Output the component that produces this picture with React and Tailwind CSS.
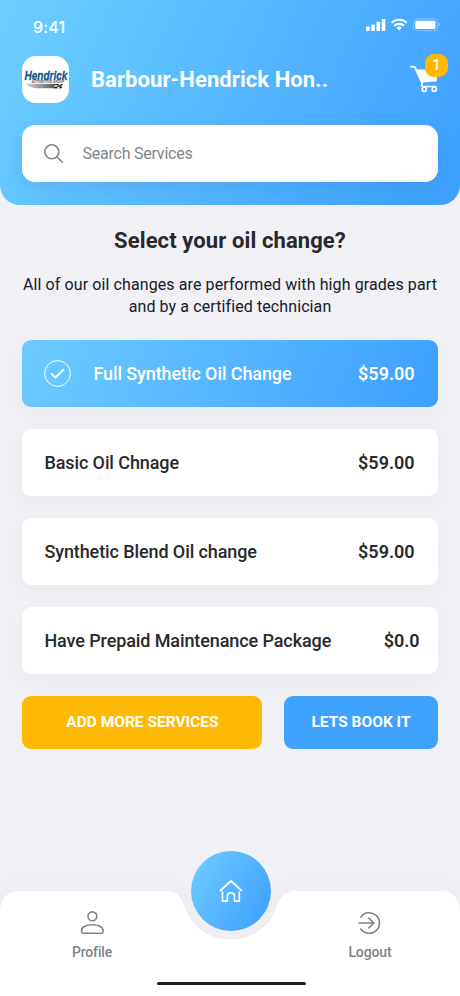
import React from 'react';

const services = [
  { name: 'Full Synthetic Oil Change', price: '$59.00', selected: true },
  { name: 'Basic Oil Chnage', price: '$59.00' },
  { name: 'Synthetic Blend Oil change', price: '$59.00' },
  { name: 'Have Prepaid Maintenance Package', price: '$0.0' },
];

const StatusBar = () => (
  <div className="flex h-[56px] items-start justify-between pt-[18px] pl-[33px] pr-[20px]">
    <span className="font-['Inter',sans-serif] text-[16px] leading-[19px] font-medium tracking-[0.2px]">9:41</span>
    <svg width="76" height="14" viewBox="0 0 76 14" fill="white">
      <rect x="2" y="8.5" width="3.6" height="4.5" rx="0.8" />
      <rect x="7.3" y="6.5" width="3.6" height="6.5" rx="0.8" />
      <rect x="12.5" y="3.8" width="3.6" height="9.2" rx="0.8" />
      <rect x="17.7" y="1" width="3.6" height="12" rx="0.8" />
      <g fill="none" stroke="white" strokeWidth="2.1">
        <path d="M27.5 4.8a11.2 11.2 0 0 1 15.4 0" />
        <path d="M30.3 7.8a7.2 7.2 0 0 1 9.8 0" />
      </g>
      <path d="M32.5 9.8a4.1 4.1 0 0 1 5.4 0l-2.7 2.8z" />
      <rect x="49.5" y="0.8" width="24" height="11.8" rx="3.4" fill="none" stroke="white" strokeOpacity="0.3" />
      <rect x="51.3" y="2.7" width="20.2" height="8.2" rx="1.6" />
      <path d="M74.6 4.6v4.2c1-.5 1.5-1.2 1.5-2.1s-.5-1.6-1.5-2.1z" fillOpacity="0.4" />
    </svg>
  </div>
);

const DealerLogo = () => (
  <svg className="shrink-0 overflow-visible" width="47" height="47" viewBox="0 0 47 47">
    <defs>
      <linearGradient id="swoosh" x1="0" x2="1">
        <stop offset="0" stopColor="#ddd" />
        <stop offset="0.7" stopColor="#666" />
        <stop offset="1" stopColor="#333" />
      </linearGradient>
    </defs>
    <rect width="47" height="47" rx="14" fill="white" />
    <text transform="translate(2.5 23.6) scale(0.77 1)" fontFamily="Liberation Sans, sans-serif" fontSize="13" fontWeight="bold" fontStyle="italic" fill="#0f5491" stroke="#0f5491" strokeWidth="0.3">Hendrick</text>
    <text transform="translate(9.5 27.2) scale(0.86 1)" fontFamily="Liberation Sans, sans-serif" fontSize="3.6" fontWeight="bold" fontStyle="italic" fill="#4c5b66">AUTOMOTIVE GROUP</text>
    <path d="M3 27.7L40.5 27.9L37.5 32.3H13Q7 31 3 27.7z" fill="url(#swoosh)" />
    <path d="M34 27.9h3l-1 1.4h-3zM39 27.9h2l-1 1.4h-2zM36 29.3h3l-1 1.5h-3zM33 30.8h3l-1 1.5h-3zM38 30.8h2.5l-1 1.5h-2.5z" fill="#111" />
    <path d="M37 27.9h2l-1 1.4h-2zM33 29.3h3l-1 1.5h-3zM36 30.8h2l-1 1.5h-2z" fill="white" />
  </svg>
);

const CartButton = () => (
  <div className="relative h-[47px] w-[38px]">
    <svg className="mt-[9px]" width="29" height="28" viewBox="0 0 29 28" fill="none">
      <path d="M1 1.8h2.3c1.2 0 1.8.5 2.2 1.5L12 17.5" stroke="white" strokeWidth="2" strokeLinecap="round" />
      <path d="M6 4.5h21v10.6c0 .8-.4 1.3-1.2 1.4L11.5 17.5z" fill="white" />
      <path d="M12.8 17l-1.2 3.2c-.3.8.1 1.2 1 1.2h13.5" stroke="white" strokeWidth="1.5" strokeLinecap="round" />
      <circle cx="14.3" cy="24.3" r="2.1" stroke="white" strokeWidth="1.6" />
      <circle cx="24.3" cy="24.3" r="2.1" stroke="white" strokeWidth="1.6" />
    </svg>
    <span className="absolute -top-[2px] left-[15px] flex h-[23px] w-[23px] items-center justify-center rounded-[9px] bg-[#ffb902] text-[14px] font-medium">1</span>
  </div>
);

const ServiceCard = ({ name, price, selected }) => (
  <div
    className={
      selected
        ? 'flex h-[67px] items-center justify-between rounded-[9px] bg-[linear-gradient(112deg,#6dcbff_0%,#3d9fff_100%)] pl-[22px] pr-[23px] text-white shadow-[0_6px_22px_rgba(40,40,80,0.035)]'
        : 'flex h-[67px] items-center justify-between rounded-[9px] bg-white pl-[22px] pr-[18px] text-[#29292b] shadow-[0_6px_22px_rgba(40,40,80,0.035)]'
    }
  >
    <div className="flex items-center gap-[22px]">
      {selected && (
        <svg width="27" height="27" viewBox="0 0 27 27" fill="none" stroke="white">
          <circle cx="13.5" cy="13.5" r="12.9" strokeWidth="1" />
          <path d="M7.5 13.8l3.8 3.8L19.5 9.8" strokeWidth="1.9" strokeLinecap="round" strokeLinejoin="round" />
        </svg>
      )}
      <span className="text-[18px] font-medium tracking-[-0.1px] whitespace-nowrap">{name}</span>
    </div>
    <span className={price === '$0.0' || selected ? 'text-[18px] font-semibold' : 'mr-[5px] text-[18px] font-semibold'}>{price}</span>
  </div>
);

const BottomNav = () => (
  <nav className="relative h-[145px]">
    <svg className="absolute inset-0 drop-shadow-[0_-4px_10px_rgba(40,40,80,0.025)]" width="460" height="145" viewBox="0 0 460 145">
      <path d="M0 145V62Q0 40 21 40H167C178 40 181 47 185 57C192 76 209 88.5 230.5 88.5C252 88.5 269 76 275 59C279 48 284 40 296 40H440Q460 40 460 62V145z" fill="white" />
    </svg>
    <div className="absolute top-0 left-[191px] flex h-[80px] w-[80px] items-center justify-center rounded-full bg-[linear-gradient(120deg,#6dcbff_5%,#3d9fff_95%)]">
      <svg width="24" height="24" viewBox="0 0 24 24" fill="none" stroke="white" strokeWidth="1.7" strokeLinejoin="round">
        <path d="M1 12L12 2L23 12" />
        <path d="M3.5 12.5V22.2H8.3V17.2C8.3 12.6 15.5 12.6 15.5 17.2V22.2H20.3V12.5" />
      </svg>
    </div>
    <div className="relative flex justify-between pr-[50px] pl-[52px] pt-[60px] text-[14px] text-[#808486]">
      <div className="flex w-[80px] flex-col items-center gap-[9px]">
        <svg width="24" height="24" viewBox="0 0 24 24" fill="none" stroke="currentColor" strokeWidth="1.6">
          <circle cx="12.4" cy="5.3" r="4.4" />
          <path d="M1.6 19.5C1.6 16 6.4 13.7 12.4 13.7S23 16 23 19.5V21C23 22 22.4 22.3 21.4 22.3H3.2C2.2 22.3 1.6 22 1.6 21z" />
        </svg>
        <span className="leading-[17px] font-medium tracking-[-0.15px]">Profile</span>
      </div>
      <div className="flex w-[80px] flex-col items-center gap-[9px]">
        <svg width="24" height="24" viewBox="0 0 24 24" fill="none" stroke="currentColor" strokeWidth="1.6">
          <path d="M2.4 6.6A10.3 10.3 0 1 1 2.4 17.4M.5 12H16M10.3 6.7L15.8 12L10.3 17.3" />
        </svg>
        <span className="leading-[17px] font-medium tracking-[-0.1px]">Logout</span>
      </div>
    </div>
    <div className="absolute top-[131px] left-[157px] h-[3px] w-[149px] rounded-full bg-[#1c1c22]" />
  </nav>
);

export default function App() {
  return (
    <div className="flex h-[996px] w-[460px] flex-col overflow-hidden bg-[#f1f0f5] font-['Roboto',sans-serif]">
      <header className="h-[205px] rounded-b-[20px] bg-[linear-gradient(115deg,#6dcfff_0%,#3d9fff_100%)] text-white">
        <StatusBar />
        <div className="flex items-center pl-[22.4px] pr-[12px]">
          <DealerLogo />
          <h1 className="ml-[21.6px] flex-1 text-[22px] leading-[28px] font-bold tracking-[0.08px] whitespace-nowrap">Barbour-Hendrick Hon..</h1>
          <CartButton />
        </div>
        <div className="mx-[22.4px] mt-[22px] flex h-[57px] items-center gap-[20px] rounded-[13px] bg-white pl-[22px] text-[#808689] shadow-[0_7px_18px_rgba(20,70,120,0.1)]">
          <svg width="19" height="19" viewBox="0 0 19 19" fill="none" stroke="currentColor" strokeWidth="1.6" strokeLinecap="round">
            <circle cx="7.8" cy="7.8" r="7" />
            <path d="M13 13L18.3 18.3" />
          </svg>
          <span className="-ml-px text-[16px] tracking-[-0.22px]">Search Services</span>
        </div>
      </header>
      <main className="flex-1 px-[22.4px] pt-[21px]">
        <h2 className="text-center text-[22px] leading-[30px] font-bold tracking-[0.1px] text-[#29292b]">Select your oil change?</h2>
        <p className="mt-[18px] text-center text-[16px] leading-[22px] tracking-[0.1px] text-[#16192a]">
          <span className="block whitespace-nowrap">All of our oil changes are performed with high grades part</span>
          <span className="block">and by a certified technician</span>
        </p>
        <div className="mt-[22px] flex flex-col gap-[22px]">
          {services.map((service) => (
            <ServiceCard key={service.name} {...service} />
          ))}
        </div>
        <div className="mt-[22px] flex gap-[22px] text-[15.5px] font-bold text-white">
          <button className="h-[53px] w-[240px] rounded-[9px] bg-[#ffb902]">ADD MORE SERVICES</button>
          <button className="h-[53px] flex-1 rounded-[9px] bg-[#3fa2ff]">LETS BOOK IT</button>
        </div>
      </main>
      <BottomNav />
    </div>
  );
}
